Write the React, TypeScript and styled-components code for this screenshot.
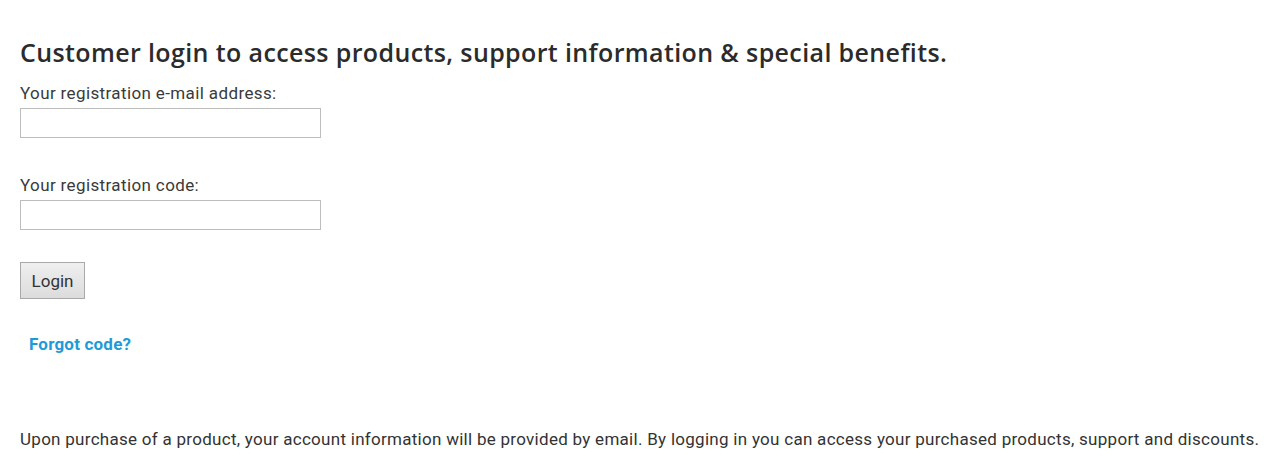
import React from "react";
import styled, { createGlobalStyle } from "styled-components";

const Global = createGlobalStyle`
  html, body { margin: 0; padding: 0; background: #fff; }
  body { font-family: Roboto, "Liberation Sans", sans-serif; color: #333; }
`;

const Page = styled.div`
  padding: 37px 20px 0 20px;
  display: flex;
  flex-direction: column;
`;

const Heading = styled.h1`
  margin: 0;
  font-family: "Open Sans", "DejaVu Sans", sans-serif;
  font-weight: 600;
  font-size: 25px;
  letter-spacing: 0.38px;
  line-height: 30px;
  color: #2b2b2b;
  white-space: nowrap;
`;

const Form = styled.form`
  display: flex;
  flex-direction: column;
  margin-top: 16px;
`;

const Field = styled.div<{ $gap: number }>`
  display: flex;
  flex-direction: column;
  margin-bottom: ${(p) => p.$gap}px;
`;

const Label = styled.label`
  font-size: 17px;
  letter-spacing: 0.38px;
  line-height: 20px;
  color: #3a3a3a;
  margin-bottom: 5px;
`;

const Input = styled.input`
  box-sizing: border-box;
  width: 301px;
  height: 30px;
  border: 1px solid #bdbdbd;
  background: #fff;
  padding: 2px 4px;
  font-size: 16px;
  outline: none;
`;

const Button = styled.button`
  align-self: flex-start;
  box-sizing: border-box;
  width: 65px;
  height: 37px;
  border: 1px solid #a9a9a9;
  background: linear-gradient(#efefef, #dcdcdc);
  font-family: Roboto, sans-serif;
  font-size: 17px;
  color: #333;
  padding: 0;
  margin-top: -6px;
`;

const Forgot = styled.a`
  align-self: flex-start;
  margin-top: 35px;
  margin-left: 9px;
  font-size: 17px;
  font-weight: 700;
  letter-spacing: 0.2px;
  color: #1e9bd7;
  text-decoration: none;
  line-height: 20px;
`;

const Note = styled.p`
  margin: 75px 0 0 0;
  font-size: 17px;
  letter-spacing: 0.28px;
  line-height: 20px;
  color: #333;
  white-space: nowrap;
`;

export default function App() {
  return (
    <>
      <Global />
      <Page>
        <Heading>Customer login to access products, support information &amp; special benefits.</Heading>
        <Form onSubmit={(e) => e.preventDefault()}>
          <Field $gap={37}>
            <Label>Your registration e-mail address:</Label>
            <Input type="text" />
          </Field>
          <Field $gap={38}>
            <Label>Your registration code:</Label>
            <Input type="text" />
          </Field>
          <Button type="submit">Login</Button>
          <Forgot href="#">Forgot code?</Forgot>
        </Form>
        <Note>
          Upon purchase of a product, your account information will be provided by email. By logging in you can access your purchased products, support and discounts.
        </Note>
      </Page>
    </>
  );
}
